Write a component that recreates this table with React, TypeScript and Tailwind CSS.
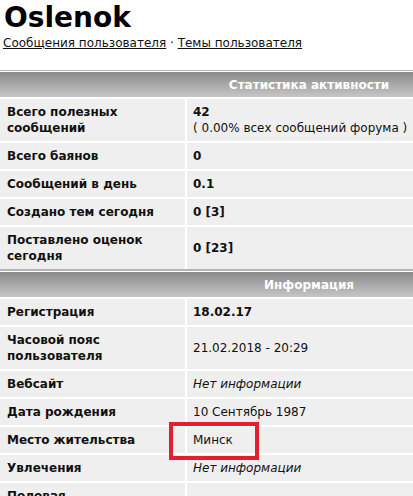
import React from "react";

type Row = {
  label: string[];
  value: React.ReactNode;
  tall?: boolean;
  highlight?: boolean;
};

const stats: Row[] = [
  {
    label: ["Всего полезных", "сообщений"],
    tall: true,
    value: (
      <div className="leading-[16px]">
        <div className="font-bold">42</div>
        <div>( 0.00% всех сообщений форума )</div>
      </div>
    ),
  },
  { label: ["Всего баянов"], value: <span className="font-bold">0</span> },
  { label: ["Сообщений в день"], value: <span className="font-bold">0.1</span> },
  { label: ["Создано тем сегодня"], value: <span className="font-bold">0 [3]</span> },
  {
    label: ["Поставлено оценок", "сегодня"],
    tall: true,
    value: <span className="font-bold">0 [23]</span>,
  },
];

const info: Row[] = [
  { label: ["Регистрация"], value: <span className="font-bold">18.02.17</span> },
  {
    label: ["Часовой пояс", "пользователя"],
    tall: true,
    value: <span>21.02.2018 - 20:29</span>,
  },
  { label: ["Вебсайт"], value: <span className="italic">Нет информации</span> },
  { label: ["Дата рождения"], value: <span>10 Сентябрь 1987</span> },
  { label: ["Место жительства"], value: <span>Минск</span>, highlight: true },
  { label: ["Увлечения"], value: <span className="italic">Нет информации</span> },
  { label: ["Половая", "принадлежность"], tall: true, value: <span></span> },
];

function Section({ title, rows }: { title: string; rows: Row[] }) {
  return (
    <div className="border-t border-[#b4b4b4] pt-[1px] bg-white">
      {/* Header bar */}
      <div className="grid grid-cols-[186px_1fr] h-[25px] bg-gradient-to-b from-[#8b8b8b] to-[#c6c6c6]">
        <div />
        <div className="flex items-center justify-center text-white font-bold text-[12px]">
          {title}
        </div>
      </div>

      <div className="flex flex-col gap-[2px] pt-[2px]">
        {rows.map((r, i) => (
          <div
            key={i}
            className={`grid grid-cols-[185px_1fr] gap-[2px] ${r.tall ? "h-[42px]" : "h-[26px]"}`}
          >
            <div className="bg-[#efefef] flex flex-col justify-center pl-[7px] font-bold text-[12px] leading-[16px] text-[#111]">
              {r.label.map((l, j) => (
                <div key={j}>{l}</div>
              ))}
            </div>
            <div className="relative bg-[#efefef] flex items-center pl-[6px] text-[12px] text-[#111]">
              {r.value}
              {/* red annotation box */}
              {r.highlight && (
                <div className="absolute z-10 left-[-18px] top-[-5px] w-[90px] h-[38px] border-[4px] border-[#e0202c]" />
              )}
            </div>
          </div>
        ))}
      </div>
    </div>
  );
}

export default function App() {
  return (
    <div className="w-[413px] h-[496px] overflow-hidden bg-white text-black font-['DejaVu_Sans',Verdana,sans-serif]">
      <h1 className="text-[28px] font-bold leading-[34px] pl-[4px] pt-[1px]">Oslenok</h1>
      <div className="text-[12px] leading-[16px] pl-[3px] text-[#111]">
        <a href="#" className="underline">
          Сообщения пользователя
        </a>{" "}
        ·{" "}
        <a href="#" className="underline">
          Темы пользователя
        </a>
      </div>

      <div className="w-[432px] mt-[19px] flex flex-col">
        <div className="border-b border-[#b4b4b4]">
          <Section title="Статистика активности" rows={stats} />
        </div>
        <Section title="Информация" rows={info} />
      </div>
    </div>
  );
}
